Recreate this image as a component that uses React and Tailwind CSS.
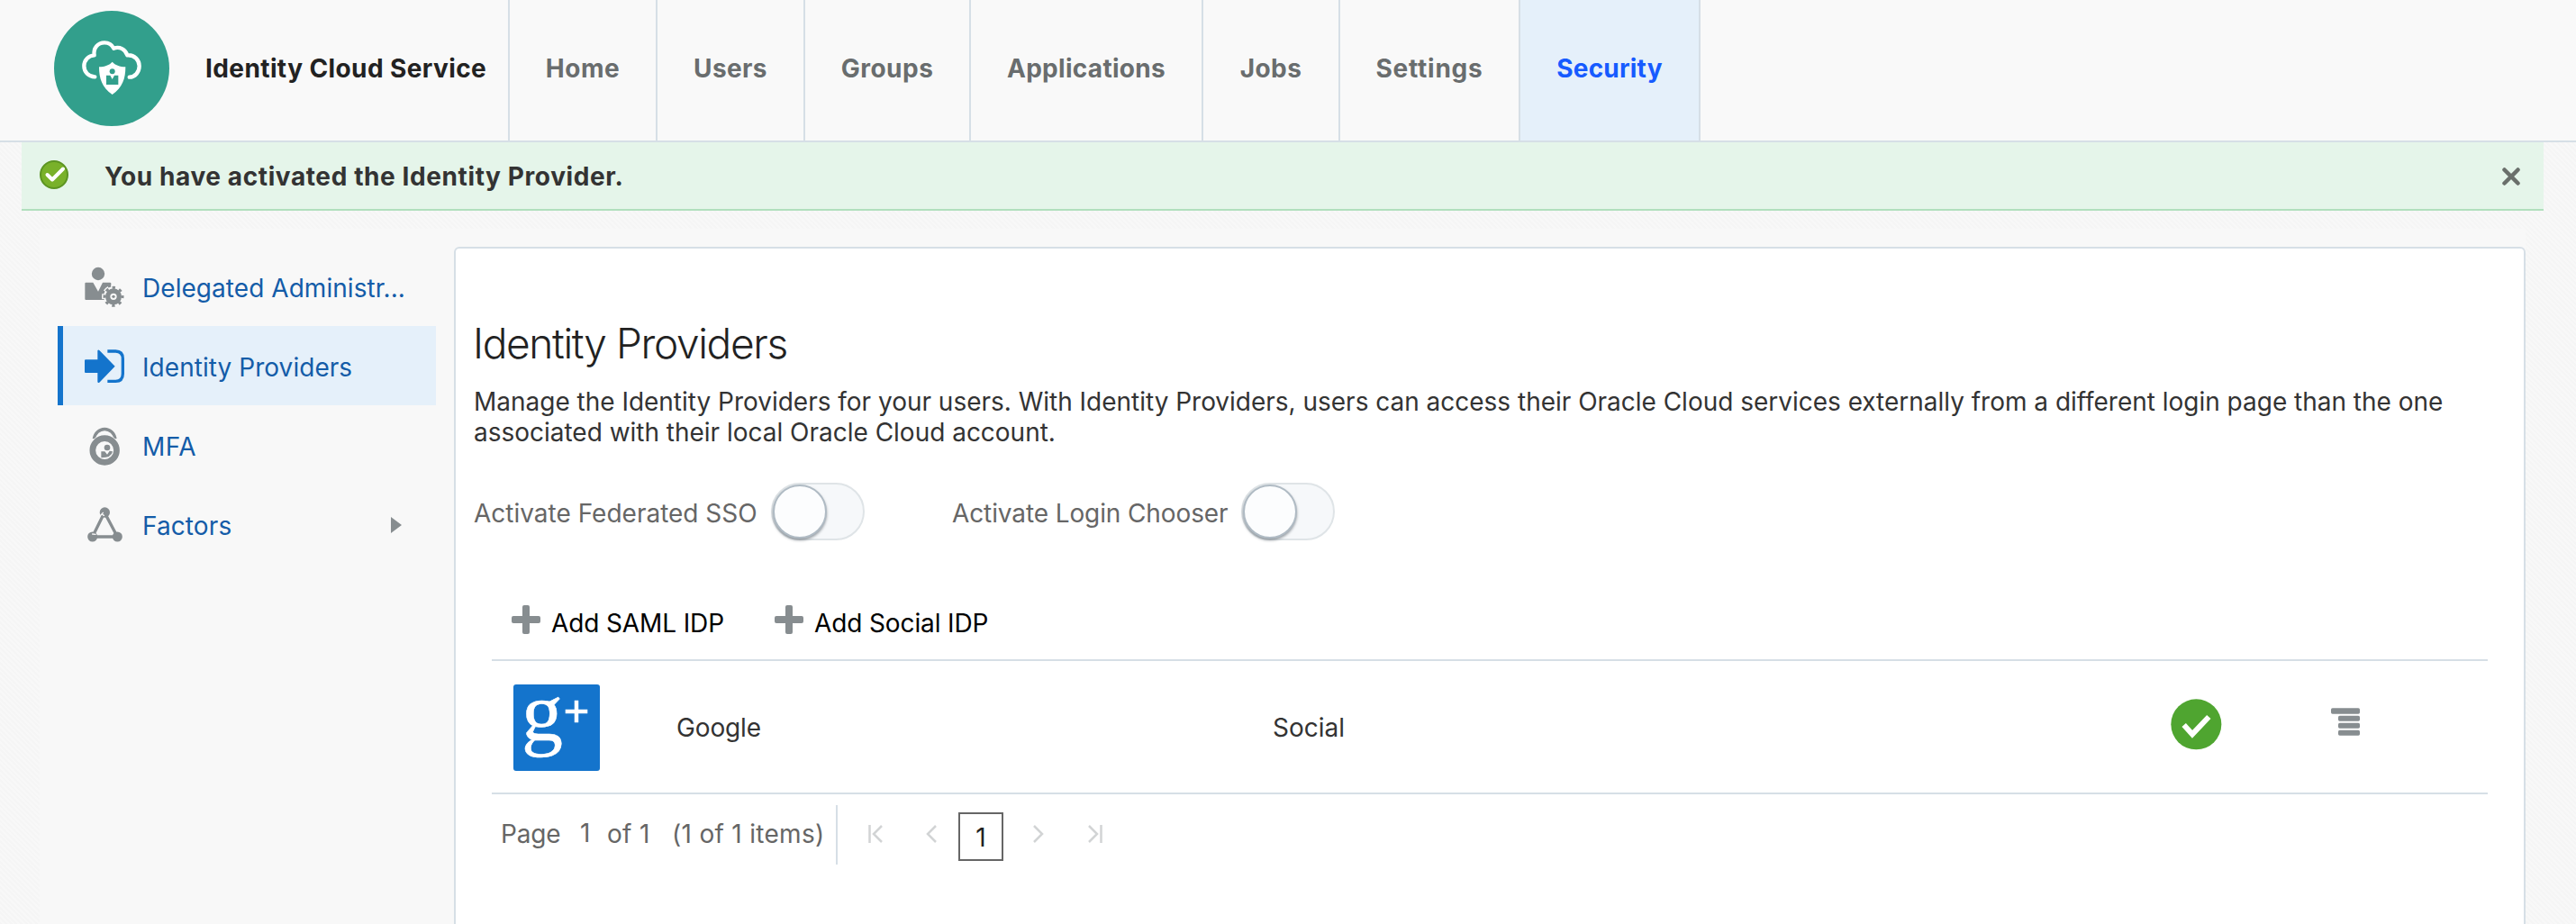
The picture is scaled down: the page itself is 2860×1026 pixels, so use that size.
const GRAY = "#878d90";

const tabs = [
  { label: "Home", cls: "w-[164px] tracking-[0.6px]" },
  { label: "Users", cls: "w-[164px] tracking-[0.4px]" },
  { label: "Groups", cls: "w-[184px] tracking-[0.5px]" },
  { label: "Applications", cls: "w-[258px] tracking-[0.3px]" },
  { label: "Jobs", cls: "w-[152px] tracking-[0.45px]" },
  { label: "Settings", cls: "w-[200px] tracking-[0.75px]" },
];

function LogoIcon() {
  return (
    <svg className="size-[128px]" viewBox="30 36 384 384">
      <circle cx="222" cy="228" r="192" fill="#329f8c" />
      <path
        d="M166 256C145 256 130 240 130 220C130 200 145 185 164 184C160 160 176 142 198 142C212 142 223 149 229 161C248 154 268 164 274 184C298 182 314 200 314 220C314 240 300 257 281 257"
        fill="none" stroke="#fff" strokeWidth="13" strokeLinecap="round" strokeLinejoin="round"
      />
      <path d="M224 206C214 217 200 222 180 223C180 262 190 292 224 315C258 292 268 262 268 223C248 222 234 217 224 206Z" fill="#fff" />
      <circle cx="224" cy="238" r="9" fill="#329f8c" />
      <path d="M204 251H217L224 264L231 251H244V282H204Z" fill="#329f8c" />
    </svg>
  );
}

function AdminIcon() {
  return (
    <svg className="size-11 shrink-0 overflow-visible" viewBox="102 48 132 132">
      <circle cx="147" cy="72" r="21.5" fill={GRAY} />
      <path d="M103 104Q103 101 106 101H130L147 131L162 101H187Q191 101 190 106V159H106Q103 159 103 156Z" fill={GRAY} />
      <circle cx="198" cy="148" r="33" fill="#f8f8f8" />
      <circle cx="198" cy="148" r="34" fill="none" stroke="#f8f8f8" strokeWidth="10" strokeDasharray="17 9.7" strokeDashoffset="8.5" />
      <circle cx="198" cy="148" r="19" fill="none" stroke={GRAY} strokeWidth="16" />
      <circle cx="198" cy="148" r="30" fill="none" stroke={GRAY} strokeWidth="9" strokeDasharray="10 13.56" strokeDashoffset="5" />
      <circle cx="198" cy="148" r="5" fill={GRAY} />
    </svg>
  );
}

function ProvidersIcon() {
  return (
    <svg className="size-11 shrink-0 overflow-visible" viewBox="102 312 132 132">
      <path d="M102 361Q102 358 105 358H145V328Q147 324 151 327L203 380L151 434Q147 436 145 433V402H105Q102 402 102 399Z" fill="#1474cc" />
      <path d="M178 330H205Q229 330 229 355V405Q229 430 205 430H178" fill="none" stroke="#1474cc" strokeWidth="10" />
    </svg>
  );
}

function MfaIcon() {
  return (
    <svg className="size-11 shrink-0 overflow-visible" viewBox="102 576 132 132">
      <path d="M133 622A36 39 0 0 1 204 622" fill="none" stroke={GRAY} strokeWidth="10" />
      <circle cx="168.500" cy="660" r="52" fill="#f8f8f8" />
      <circle cx="168.500" cy="660" r="40" fill="none" stroke={GRAY} strokeWidth="20" />
      <circle cx="177" cy="651" r="10" fill={GRAY} />
      <path d="M157 664H169L177 674L185 662L195 664Q192 685 157 685Z" fill={GRAY} />
    </svg>
  );
}

function FactorsIcon() {
  return (
    <svg className="size-11 shrink-0 overflow-visible" viewBox="102 840 132 132">
      <path d="M168 867L128 948H211Z" fill="none" stroke={GRAY} strokeWidth="10" />
      <circle cx="169" cy="867" r="17" fill={GRAY} />
      <circle cx="128" cy="948" r="16.500" fill={GRAY} />
      <circle cx="211" cy="948" r="16.500" fill={GRAY} />
      <path d="M156 876L163 868M166 877L160 873M128 939L138 940" stroke="#f8f8f8" strokeWidth="4" strokeLinecap="round" />
    </svg>
  );
}

function Plus() {
  return (
    <svg className="size-8" viewBox="0 0 32 32">
      <rect x="12" width="8" height="32" rx="2" fill={GRAY} />
      <rect y="12" width="32" height="8" rx="2" fill={GRAY} />
    </svg>
  );
}

function Toggle() {
  return (
    <div className="h-16 w-[104px] rounded-full border-2 border-[#dfe4e7] bg-[#f6f8fa]">
      <div className="size-[60px] rounded-full border-2 border-[#b0bbc4] bg-[#fcfdfe] shadow-[0_2px_3px_rgba(60,70,80,0.5)]" />
    </div>
  );
}

function SideItem({ icon, label, cls, active, arrow }) {
  return (
    <div className={active ? "flex h-[88px] items-center border-l-[6px] border-[#1474cc] bg-[#e5f0fa] pl-6" : "flex h-[88px] items-center border-l-[6px] border-transparent pl-6"}>
      {icon}
      <span className={"ml-5 pt-[3px] text-[28px] leading-[40px] whitespace-nowrap text-[#145ca8] " + cls}>{label}</span>
      {arrow && (
        <svg className="mt-[2px] mr-[38px] ml-auto h-[18px] w-3" viewBox="0 0 12 18">
          <path d="M0 0L12 9L0 18Z" fill={GRAY} />
        </svg>
      )}
    </div>
  );
}

export default function App() {
  return (
    <div className="h-[1026px] w-[2860px] overflow-hidden bg-[repeating-linear-gradient(45deg,#f5f5f5_0_2px,#f8f8f8_2px_4px)] font-['Inter',sans-serif] text-[#333]">
      <header className="flex h-[158px] border-b-2 border-[#d6dfe6] bg-[#f9f9f9] text-[28px] leading-[152px] font-bold">
        <div className="flex w-[564px] shrink-0 pl-[60px]">
          <div className="pt-3"><LogoIcon /></div>
          <span className="ml-10 tracking-[0.4px] whitespace-nowrap text-[#222]">Identity Cloud Service</span>
        </div>
        {tabs.map((t) => (
          <div key={t.label} className={"shrink-0 border-l-2 border-[#d6dfe6] text-center text-[#696d6e] " + t.cls}>{t.label}</div>
        ))}
        <div className="w-[202px] border-x-2 border-[#d6dfe6] bg-[#e5f0fa] text-center tracking-[0.2px] text-[#165bff]">Security</div>
      </header>

      <div className="mx-[24px] mr-[36px] flex h-[76px] items-center border-b-2 border-[#b1dfbd] bg-[#e5f5ea] pr-[26px] pl-5">
        <svg className="-mt-[2px] size-8" viewBox="0 0 32 32">
          <circle cx="16" cy="16" r="15" fill="#79b12a" stroke="#5c9422" strokeWidth="2" />
          <path d="M8.500 16L14 21.500L26 9.500" fill="none" stroke="#fff" strokeWidth="4" strokeLinecap="round" strokeLinejoin="round" />
        </svg>
        <span className="ml-10 pt-[2px] text-[28px] font-bold tracking-[0.6px]">You have activated the Identity Provider.</span>
        <svg className="mt-[2px] ml-auto size-5" viewBox="0 0 20 20">
          <path d="M2.500 2.500L17.500 17.500M17.500 2.500L2.500 17.500" stroke="#6a6f6b" strokeWidth="4.500" strokeLinecap="round" />
        </svg>
      </div>

      <div className="mt-5 ml-[44px] flex h-[772px] w-[2760px] bg-[#f8f8f8] pt-5">
        <nav className="w-[460px] shrink-0 px-5">
          <SideItem icon={<AdminIcon />} label="Delegated Administr..." cls="tracking-[0.05px]" />
          <SideItem icon={<ProvidersIcon />} label="Identity Providers" cls="tracking-[0.05px]" active />
          <SideItem icon={<MfaIcon />} label="MFA" cls="tracking-[0.5px]" />
          <SideItem icon={<FactorsIcon />} label="Factors" cls="tracking-[0.1px]" arrow />
        </nav>

        <main className="h-[772px] w-[2300px] rounded-t-[6px] border-2 border-[#d6dfe6] bg-white pt-[75px] text-[28px]">
          <h1 className="pl-[19px] text-[46px] leading-[60px] font-light tracking-[-1.35px] text-[#222]">Identity Providers</h1>
          <p className="mt-[18px] pl-5 leading-[34px] tracking-[-0.015px] whitespace-nowrap">
            Manage the Identity Providers for your users. With Identity Providers, users can access their Oracle Cloud services externally from a different login page than the one
            <br />
            associated with their local Oracle Cloud account.
          </p>

          <div className="mt-[39px] flex h-16 items-center pl-5 text-[#666]">
            <span className="w-[330px] pt-1">Activate Federated SSO</span>
            <Toggle />
            <span className="ml-[97px] w-[321px] pt-1 tracking-[-0.11px]">Activate Login Chooser</span>
            <Toggle />
          </div>

          <div className="mt-[72px] ml-10 w-[2216px]">
            <div className="flex h-[60px] pl-[22px] leading-[40px] tracking-[-0.12px] text-black">
              <Plus />
              <span className="ml-3 w-[248px]">Add SAML IDP</span>
              <Plus />
              <span className="ml-3">Add Social IDP</span>
            </div>

            <div className="flex h-[150px] items-center border-y-2 border-[#d6dfe6] pl-6">
              <svg className="mt-[2px] size-24 overflow-visible" viewBox="0 0 96 96">
                <rect width="96" height="96" rx="3" fill="#1474cc" />
                <text x="9" y="62" fontSize="92" fill="#fff" stroke="#fff" strokeWidth="0.5" className="font-['Liberation_Serif',serif]">g</text>
                <path d="M57.700 30H82.300M70 17.700V42.300" stroke="#fff" strokeWidth="4.500" />
              </svg>
              <span className="ml-[85px] w-[662px] pt-[2px] tracking-[-0.15px]">Google</span>
              <span className="w-[997px] pt-[2px]">Social</span>
              <svg className="-mt-[6px] size-[57px]" viewBox="209 167 171 171">
                <circle cx="294" cy="252" r="84" fill="#4fa530" />
                <path d="M253 254L281 285L336 227" fill="none" stroke="#fff" strokeWidth="18" />
              </svg>
              <svg className="-mt-3 ml-[121px] h-[31px] w-8" viewBox="744 196 96 93">
                <g fill={GRAY}>
                  <rect x="744" y="197" width="96" height="19" rx="5" />
                  <rect x="768" y="222" width="72" height="18" rx="5" />
                  <rect x="768" y="246" width="72" height="18" rx="5" />
                  <rect x="768" y="270" width="72" height="18" rx="5" />
                </g>
              </svg>
            </div>

            <div className="mt-3 flex h-[66px] items-center pl-[10px] text-[#666]">
              <span className="-mt-[2px] w-[88px] tracking-[-0.15px]">Page</span>
              <span className="-mt-1 w-[30px]">1</span>
              <span className="-mt-[2px] w-[72px] tracking-[0.3px] whitespace-nowrap">of 1</span>
              <span className="-mt-[2px] w-[182px] tracking-[0.3px] whitespace-nowrap">(1 of 1 items)</span>
              <span className="h-[66px] w-[2px] bg-[#d6dfe6]" />
              <svg className="-mt-[2px] ml-[34px] h-5 w-4" viewBox="0 0 16 20">
                <path d="M1.500 0V20M15 1L6 10L15 19" fill="none" stroke="#d2d4d5" strokeWidth="2.500" />
              </svg>
              <svg className="-mt-[2px] ml-12 h-5 w-3" viewBox="0 0 12 20">
                <path d="M11 1L2 10L11 19" fill="none" stroke="#d2d4d5" strokeWidth="2.500" />
              </svg>
              <span className="mt-[4px] ml-6 flex h-[54px] w-[50px] items-center justify-center border-2 border-[#666] pt-[2px] text-[#222]">1</span>
              <svg className="-mt-[2px] ml-[33px] h-5 w-3" viewBox="0 0 12 20">
                <path d="M1 1L10 10L1 19" fill="none" stroke="#d2d4d5" strokeWidth="2.500" />
              </svg>
              <svg className="-mt-[2px] ml-[49px] h-5 w-4" viewBox="0 0 16 20">
                <path d="M14.500 0V20M1 1L10 10L1 19" fill="none" stroke="#d2d4d5" strokeWidth="2.500" />
              </svg>
            </div>
          </div>
        </main>
      </div>
    </div>
  );
}
